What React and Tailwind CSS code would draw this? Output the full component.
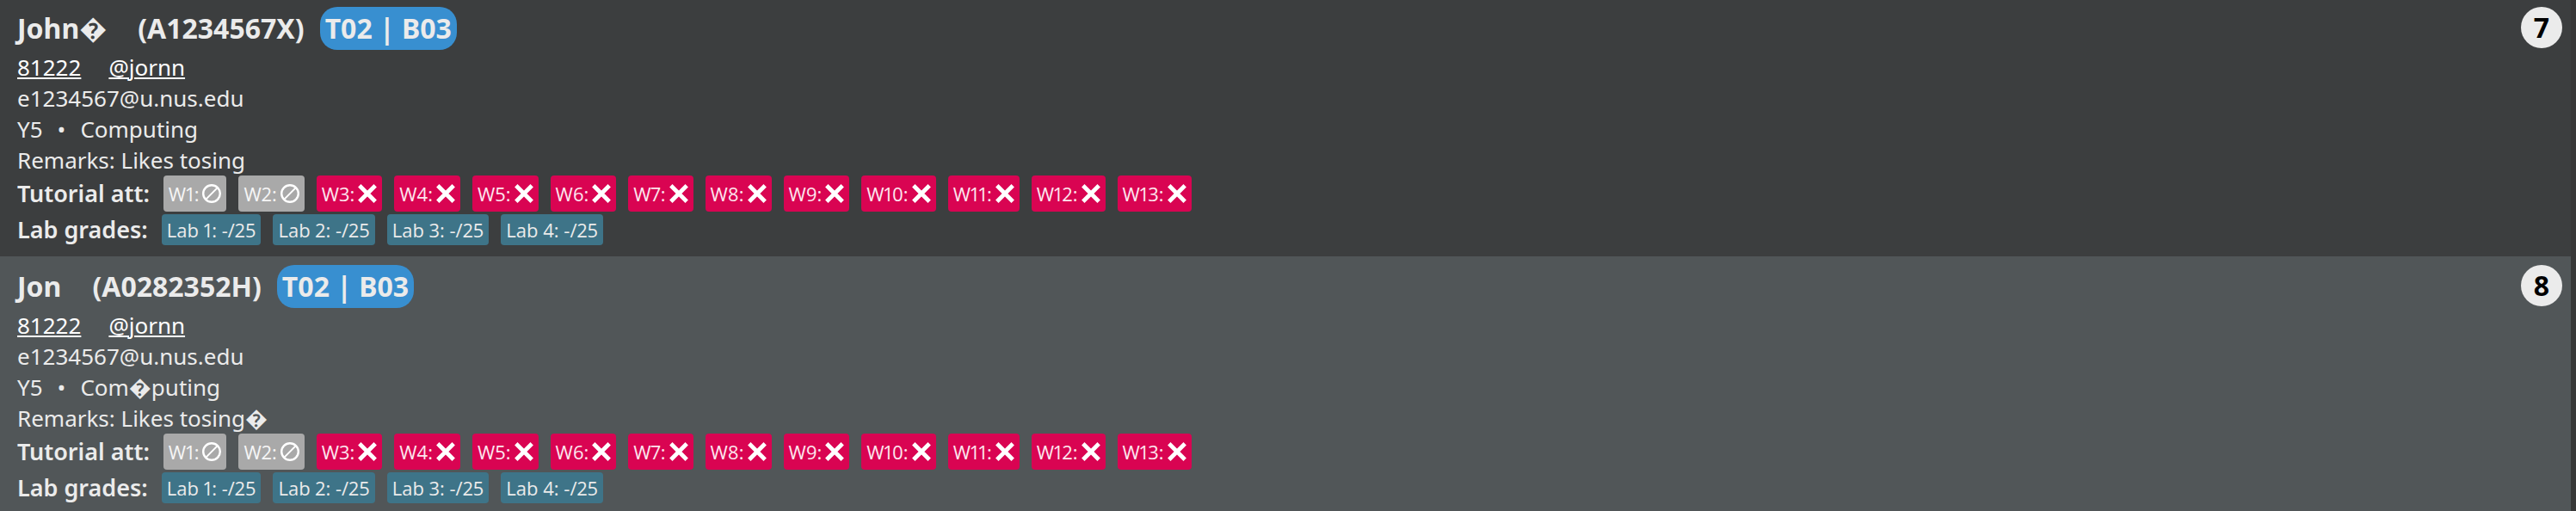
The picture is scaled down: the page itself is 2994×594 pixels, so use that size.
import React from "react";

const weeks = Array.from({ length: 13 }, (_, i) => ({
  label: `W${i + 1}:`,
  status: i < 2 ? "none" : "absent",
}));

const labs = ["Lab 1: -/25", "Lab 2: -/25", "Lab 3: -/25", "Lab 4: -/25"];

const students = [
  {
    index: 7,
    name: "John\uFFFD",
    id: "(A1234567X)",
    major: "Computing",
    remarks: "Remarks: Likes tosing",
  },
  {
    index: 8,
    name: "Jon",
    id: "(A0282352H)",
    major: "Com\uFFFDputing",
    remarks: "Remarks: Likes tosing\uFFFD",
  },
];

function NoneIcon() {
  return (
    <svg viewBox="0 0 22 22" className="size-[22px] shrink-0" fill="none" stroke="#fff" aria-hidden="true">
      <circle cx="11" cy="11" r="9.8" strokeWidth="2.4" />
      <path d="M4.4 17.6L17.6 4.4" strokeWidth="2" />
    </svg>
  );
}

function CrossIcon() {
  return (
    <svg viewBox="0 0 22 22" className="size-[22px] shrink-0" fill="none" stroke="#fff" aria-hidden="true">
      <path d="M1.8 1.8L20.2 20.2M20.2 1.8L1.8 20.2" strokeWidth="4.8" />
    </svg>
  );
}

function WeekChip({ label, status }) {
  const none = status === "none";
  return (
    <li
      className={`flex h-[42px] items-center gap-1 rounded px-1.5 font-['Open_Sans','Noto_Sans',sans-serif] text-[22px] font-medium proportional-nums ${
        none ? "bg-[#a9a9a9] text-[#f6f6f6]" : "bg-[#d90452] text-[#fde6ee]"
      }`}
    >
      <span>{label}</span>
      {none ? <NoneIcon /> : <CrossIcon />}
    </li>
  );
}

function StudentCard({ student, alt }) {
  return (
    <li
      className={`flex items-start justify-between pr-2.5 pl-5 ${
        alt ? "grow bg-[#515658] pt-2.5" : "bg-[#3c3e3f] pt-2 pb-[13px]"
      }`}
    >
      <div className="text-[26px] leading-9">
        <div className="flex h-[50px] items-center text-[32px] font-bold">
          <h2 className="mr-9">{student.name}</h2>
          <span className="mr-[18px]">{student.id}</span>
          <span className="flex h-[50px] items-center rounded-[20px] bg-[#388fd0] px-1.5">T02 | B03</span>
        </div>
        <div className="mt-0.5 flex gap-8 text-white">
          <a href="#phone" className="underline decoration-2 underline-offset-2">81222</a>
          <a href="#handle" className="underline decoration-2 underline-offset-2">@jornn</a>
        </div>
        <p>e1234567@u.nus.edu</p>
        <p className="flex gap-[17px]">
          <span>Y5</span>
          <span>•</span>
          <span>{student.major}</span>
        </p>
        <p>{student.remarks}</p>
        <div className="flex items-center gap-4">
          <h3 className="text-[27px] leading-9 font-semibold">Tutorial att:</h3>
          <ul className="flex gap-3.5">
            {weeks.map((w) => (
              <WeekChip key={w.label} {...w} />
            ))}
          </ul>
        </div>
        <div className="mt-[3px] flex items-center gap-4">
          <h3 className="text-[27px] leading-9 font-semibold">Lab grades:</h3>
          <ul className="flex gap-3.5">
            {labs.map((lab) => (
              <li key={lab} className="h-9 rounded bg-[#3e7488] px-1.5 font-['Open_Sans','Noto_Sans',sans-serif] text-[22px] font-medium proportional-nums">
                {lab}
              </li>
            ))}
          </ul>
        </div>
      </div>
      <span className="flex size-12 items-center justify-center rounded-full bg-[#ebebeb] text-[32px] font-bold text-black">
        {student.index}
      </span>
    </li>
  );
}

export default function App() {
  return (
    <main className="flex min-h-screen flex-col bg-[#383838] pr-1.5 font-['Noto_Sans','Open_Sans',sans-serif] text-[#ebebeb]">
      <ul className="flex grow flex-col">
        {students.map((s, i) => (
          <StudentCard key={s.index} student={s} alt={i % 2 === 1} />
        ))}
      </ul>
    </main>
  );
}
